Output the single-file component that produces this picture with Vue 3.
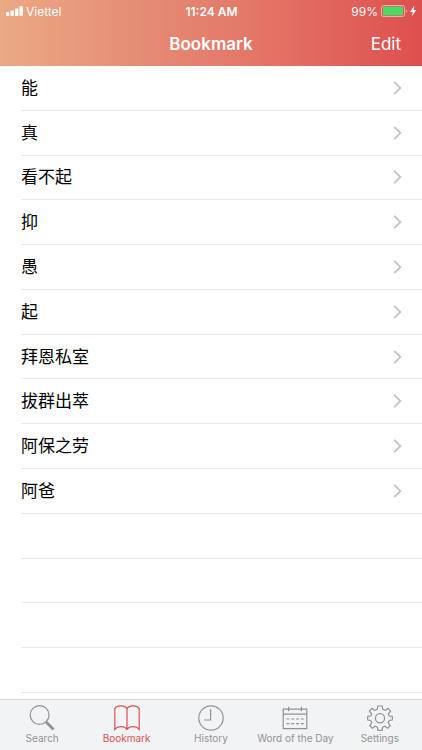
<script setup>
import { ref } from 'vue'

const words = ['能', '真', '看不起', '抑', '愚', '起', '拜恩私室', '拔群出萃', '阿保之劳', '阿爸']
const emptyRows = 4
const tabs = [
  { id: 'search', label: 'Search' },
  { id: 'bookmark', label: 'Bookmark' },
  { id: 'history', label: 'History' },
  { id: 'word', label: 'Word of the Day' },
  { id: 'settings', label: 'Settings' },
]
const active = ref('bookmark')
</script>

<template>
  <div class="screen">
    <header class="top">
      <div class="status">
        <div class="carrier">
          <svg class="signal" viewBox="0 0 17 10" aria-hidden="true">
            <rect x="0" y="6" width="3.4" height="4" rx="1" />
            <rect x="4.5" y="4.5" width="3.4" height="5.5" rx="1" />
            <rect x="9" y="2.5" width="3.4" height="7.5" rx="1" />
            <rect x="13.5" y="0" width="3.4" height="10" rx="1" />
          </svg>
          <span>Viettel</span>
        </div>
        <div class="time">11:24 AM</div>
        <div class="power">
          <span>99%</span>
          <svg class="battery" viewBox="0 0 36 12" aria-hidden="true">
            <rect x="0.5" y="0.5" width="23" height="11" rx="2" fill="none" stroke="#fff" stroke-opacity="0.5" />
            <rect x="2" y="1.6" width="20" height="8.8" rx="0.8" fill="#4cd964" />
            <path d="M24.8 4.2Q26.2 4.6 26.2 6T24.8 7.8Z" fill="#fff" fill-opacity="0.5" />
            <path d="M33.4 0.6L29 6.9H31.7L30.7 11.6L35.4 5.1H32.7Z" fill="#fff" />
          </svg>
        </div>
      </div>
      <nav class="bar">
        <h1>Bookmark</h1>
        <button class="edit" type="button">Edit</button>
      </nav>
    </header>

    <ul class="list">
      <li v-for="w in words" :key="w" class="row">
        <a class="link" href="#">
          <span>{{ w }}</span>
          <svg class="chevron" viewBox="0 0 9 14" aria-hidden="true">
            <path d="M1.2 0.9L7.4 7L1.2 13.1" />
          </svg>
        </a>
      </li>
      <li v-for="n in emptyRows" :key="'empty' + n" class="row" aria-hidden="true"></li>
    </ul>

    <nav class="tabs">
      <button
        v-for="t in tabs"
        :key="t.id"
        type="button"
        class="tab"
        :class="{ active: active === t.id }"
        @click="active = t.id"
      >
        <svg class="icon" viewBox="0 0 26 26" aria-hidden="true">
          <g v-if="t.id === 'search'">
            <circle cx="10.6" cy="10" r="9.4" />
            <path d="M16.7 16.6L18.4 18.3" />
            <path d="M17.4 17.2L24.6 24.4" stroke-width="2.8" />
          </g>
          <g v-else-if="t.id === 'bookmark'">
            <path d="M13 3.8C11 .2 3.2 -.2 .8 3.6V24.4C3.6 20.8 10.6 20.8 13 24.4C15.4 20.8 22.4 20.8 25.2 24.4V3.6C22.8 -.2 15 .2 13 3.8ZM13 3.8V24.4" />
          </g>
          <g v-else-if="t.id === 'history'">
            <circle cx="13" cy="13" r="12.2" />
            <path d="M12.6 4V15H6" />
          </g>
          <g v-else-if="t.id === 'word'">
            <path d="M1.2 4.2H24.8V23.6H1.2ZM1.2 9.2H24.8M6.6 1.8V6.2M19.4 1.8V6.2" />
            <path d="M4.4 14H21.8M4.4 18.6H21.8" stroke-dasharray="3 1.8" />
          </g>
          <g v-else>
            <path d="M10.8 1H15.2L15.7 4.3L18.3 5.4L21 3.4L23.6 6.2L21.3 8.8L22.2 11L25.3 11.4V15L22.2 15.5L21.2 17.9L23.3 20.6L20.6 23.2L18 21.2L15.6 22.2L15.1 25.3H10.9L10.4 22.2L8 21.2L5.4 23.2L2.7 20.6L4.8 17.9L3.8 15.5L.7 15V11.4L3.8 11L4.7 8.8L2.4 6.2L5 3.4L7.7 5.4L10.3 4.3Z" />
            <circle cx="13" cy="13.2" r="4.6" />
          </g>
        </svg>
        <span>{{ t.label }}</span>
      </button>
    </nav>
  </div>
</template>

<style>
body {
  margin: 0;
}
</style>

<style scoped>
.screen {
  display: flex;
  flex-direction: column;
  min-height: 100vh;
  background: #fff;
  font-family: Inter, "Noto Sans CJK SC", sans-serif;
}
.top {
  color: #fff;
  background: linear-gradient(90deg, #eba984 0%, #e58c75 34%, #e27164 66%, #de4f4f 100%);
}
.status {
  display: grid;
  grid-template-columns: 1fr auto 1fr;
  align-items: center;
  height: 22px;
  padding: 0 5px 0 6px;
  font-size: 12px;
}
.carrier,
.power {
  display: flex;
  align-items: center;
  gap: 3px;
}
.power {
  justify-content: flex-end;
}
.signal {
  width: 17px;
  height: 10px;
  fill: #fff;
}
.battery {
  width: 36px;
  height: 12px;
}
.time {
  font-weight: 600;
}
.bar {
  display: grid;
  grid-template-columns: 1fr auto 1fr;
  align-items: center;
  height: 44px;
  padding: 0 21px;
}
h1 {
  grid-column: 2;
  margin: 0;
  font-size: 17px;
  font-weight: 600;
}
.edit {
  justify-self: end;
  padding: 0;
  border: 0;
  background: none;
  color: inherit;
  font: inherit;
  font-size: 17px;
}
.list {
  flex: 1;
  display: grid;
  grid-auto-rows: minmax(44px, 1fr);
  margin: 0;
  padding: 0 0 6px 21px;
  list-style: none;
}
.row {
  display: grid;
  border-bottom: 1px solid #e9e9eb;
}
.link {
  display: flex;
  align-items: center;
  justify-content: space-between;
  padding-right: 20px;
  color: #000;
  font-size: 17px;
  line-height: 24px;
  text-decoration: none;
}
.chevron {
  width: 9px;
  height: 14px;
  fill: none;
  stroke: #c4c4c8;
  stroke-width: 1.8;
}
.tabs {
  display: grid;
  grid-template-columns: repeat(5, 1fr);
  height: 50px;
  border-top: 1px solid #d3d4d6;
  background: #f2f3f5;
}
.tab {
  display: flex;
  flex-direction: column;
  align-items: center;
  padding: 5px 0 0;
  border: 0;
  background: none;
  color: #929294;
  font-family: inherit;
  font-size: 10px;
  line-height: 14px;
  white-space: nowrap;
}
.tab.active {
  color: #de5155;
}
.icon {
  width: 26px;
  height: 26px;
  fill: none;
  stroke: currentColor;
  stroke-width: 1.2;
}
</style>
